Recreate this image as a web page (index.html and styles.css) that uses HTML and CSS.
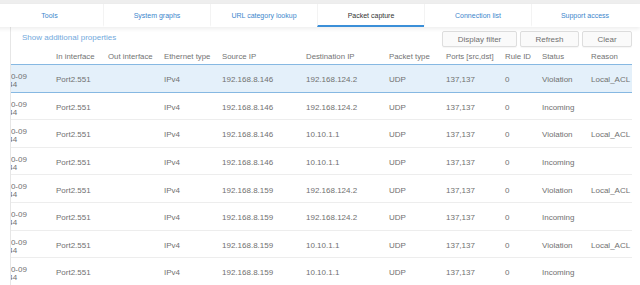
FILE: index.html
```html
<!DOCTYPE html>
<html lang="en">
<head>
    <meta charset="UTF-8">
    <meta name="viewport" content="width=device-width, initial-scale=1.0">
    <title>Packet capture</title>
    <link rel="stylesheet" href="styles.css">
</head>
<body>
    <div class="top-strip"></div>
    <nav class="tabs">
        <a class="tab">Tools</a>
        <a class="tab">System graphs</a>
        <a class="tab">URL category lookup</a>
        <a class="tab active">Packet capture</a>
        <a class="tab">Connection list</a>
        <a class="tab">Support access</a>
    </nav>

    <div class="panel">
        <div class="toolbar">
            <a class="link">Show additional properties</a>
            <div class="buttons">
                <button class="btn btn-filter">Display filter</button>
                <button class="btn btn-refresh">Refresh</button>
                <button class="btn btn-clear">Clear</button>
            </div>
        </div>

        <div class="grid-wrap">
            <table class="grid">
                <colgroup>
                    <col class="c-time">
                    <col class="c-in">
                    <col class="c-out">
                    <col class="c-eth">
                    <col class="c-src">
                    <col class="c-dst">
                    <col class="c-pkt">
                    <col class="c-ports">
                    <col class="c-rule">
                    <col class="c-status">
                    <col class="c-reason">
                </colgroup>
                <thead>
                    <tr>
                        <th></th>
                        <th>In interface</th>
                        <th>Out interface</th>
                        <th>Ethernet type</th>
                        <th>Source IP</th>
                        <th>Destination IP</th>
                        <th>Packet type</th>
                        <th>Ports [src,dst]</th>
                        <th>Rule ID</th>
                        <th>Status</th>
                        <th>Reason</th>
                    </tr>
                </thead>
                <tbody>
                    <tr class="selected">
                        <td class="time">2019-10-09<br>14:21:44</td>
                        <td>Port2.551</td><td></td><td>IPv4</td>
                        <td>192.168.8.146</td><td>192.168.124.2</td>
                        <td>UDP</td><td>137,137</td><td>0</td>
                        <td>Violation</td><td>Local_ACL</td>
                    </tr>
                    <tr>
                        <td class="time">2019-10-09<br>14:21:44</td>
                        <td>Port2.551</td><td></td><td>IPv4</td>
                        <td>192.168.8.146</td><td>192.168.124.2</td>
                        <td>UDP</td><td>137,137</td><td>0</td>
                        <td>Incoming</td><td></td>
                    </tr>
                    <tr>
                        <td class="time">2019-10-09<br>14:21:44</td>
                        <td>Port2.551</td><td></td><td>IPv4</td>
                        <td>192.168.8.146</td><td>10.10.1.1</td>
                        <td>UDP</td><td>137,137</td><td>0</td>
                        <td>Violation</td><td>Local_ACL</td>
                    </tr>
                    <tr>
                        <td class="time">2019-10-09<br>14:21:44</td>
                        <td>Port2.551</td><td></td><td>IPv4</td>
                        <td>192.168.8.146</td><td>10.10.1.1</td>
                        <td>UDP</td><td>137,137</td><td>0</td>
                        <td>Incoming</td><td></td>
                    </tr>
                    <tr>
                        <td class="time">2019-10-09<br>14:21:44</td>
                        <td>Port2.551</td><td></td><td>IPv4</td>
                        <td>192.168.8.159</td><td>192.168.124.2</td>
                        <td>UDP</td><td>137,137</td><td>0</td>
                        <td>Violation</td><td>Local_ACL</td>
                    </tr>
                    <tr>
                        <td class="time">2019-10-09<br>14:21:44</td>
                        <td>Port2.551</td><td></td><td>IPv4</td>
                        <td>192.168.8.159</td><td>192.168.124.2</td>
                        <td>UDP</td><td>137,137</td><td>0</td>
                        <td>Incoming</td><td></td>
                    </tr>
                    <tr>
                        <td class="time">2019-10-09<br>14:21:44</td>
                        <td>Port2.551</td><td></td><td>IPv4</td>
                        <td>192.168.8.159</td><td>10.10.1.1</td>
                        <td>UDP</td><td>137,137</td><td>0</td>
                        <td>Violation</td><td>Local_ACL</td>
                    </tr>
                    <tr>
                        <td class="time">2019-10-09<br>14:21:44</td>
                        <td>Port2.551</td><td></td><td>IPv4</td>
                        <td>192.168.8.159</td><td>10.10.1.1</td>
                        <td>UDP</td><td>137,137</td><td>0</td>
                        <td>Incoming</td><td></td>
                    </tr>
                </tbody>
            </table>
        </div>
    </div>
</body>
</html>
```

FILE: styles.css
```css
html, body {
    margin: 0;
    padding: 0;
    background: #fff;
    overflow: hidden;
}
body {
    font-family: "Liberation Sans", Arial, sans-serif;
    font-size: 8px;
    color: #707070;
    width: 640px;
    height: 285px;
}
.top-strip {
    height: 4px;
    background: #eeeeee;
}
.tabs {
    display: grid;
    grid-template-columns: repeat(6, 107px);
    margin-left: -4px;
    height: 23px;
    background: #fff;
    box-shadow: 0 2px 4px rgba(0, 0, 0, 0.07);
    position: relative;
}
.tab {
    display: flex;
    align-items: center;
    justify-content: center;
    font-size: 7px;
    color: #3c86cc;
    border-left: 1px solid #f3f3f3;
    border-bottom: 2px solid transparent;
    padding-top: 1px;
}
.tab:first-child {
    border-left: none;
}
.tab.active {
    color: #333;
    border-bottom-color: #3b8fd8;
}
.panel {
    margin-left: 10px;
    margin-right: 8px;
    border-left: 1px solid #e6e6e6;
    padding-top: 4px;
}
.toolbar {
    display: flex;
    justify-content: space-between;
    align-items: flex-start;
    height: 17px;
}
.link {
    color: #72a9dc;
    margin-left: 11px;
    margin-top: 2px;
}
.buttons {
    display: flex;
    gap: 3px;
}
.btn {
    font-family: inherit;
    font-size: 8px;
    color: #707070;
    background: #fafafa;
    border: 1px solid #dedede;
    border-radius: 2px;
    height: 16px;
    padding: 0;
    box-shadow: 0 1px 1px rgba(0, 0, 0, 0.04);
}
.btn-filter { width: 75px; }
.btn-refresh { width: 59px; }
.btn-clear { width: 50px; }

.grid-wrap {
    overflow: hidden;
}
.grid {
    border-collapse: collapse;
    table-layout: fixed;
    width: 651px;
    margin-left: -29px;
}
.c-time { width: 74px; }
.c-in { width: 52px; }
.c-out { width: 56px; }
.c-eth { width: 58px; }
.c-src { width: 84px; }
.c-dst { width: 83px; }
.c-pkt { width: 57px; }
.c-ports { width: 59px; }
.c-rule { width: 37px; }
.c-status { width: 49px; }
.c-reason { width: 42px; }

.grid th {
    font-weight: normal;
    font-size: 7.8px;
    text-align: left;
    color: #737373;
    padding: 0;
    height: 16px;
    vertical-align: middle;
    white-space: nowrap;
}
.grid th:first-child,
.grid td.time {
    padding-left: 4px;
}
.grid td {
    padding: 3px 0 0;
    height: 23.6px;
    border-bottom: 1px solid #ededed;
    white-space: nowrap;
    vertical-align: middle;
    color: #707070;
}
.grid td.time {
    line-height: 8px;
    vertical-align: top;
    padding-top: 8px;
    height: 18.6px;
}
.grid tr.selected td {
    background: #e4f0fa;
    border-top: 1px solid #86b8e2;
    border-bottom: 1px solid #86b8e2;
}
```
